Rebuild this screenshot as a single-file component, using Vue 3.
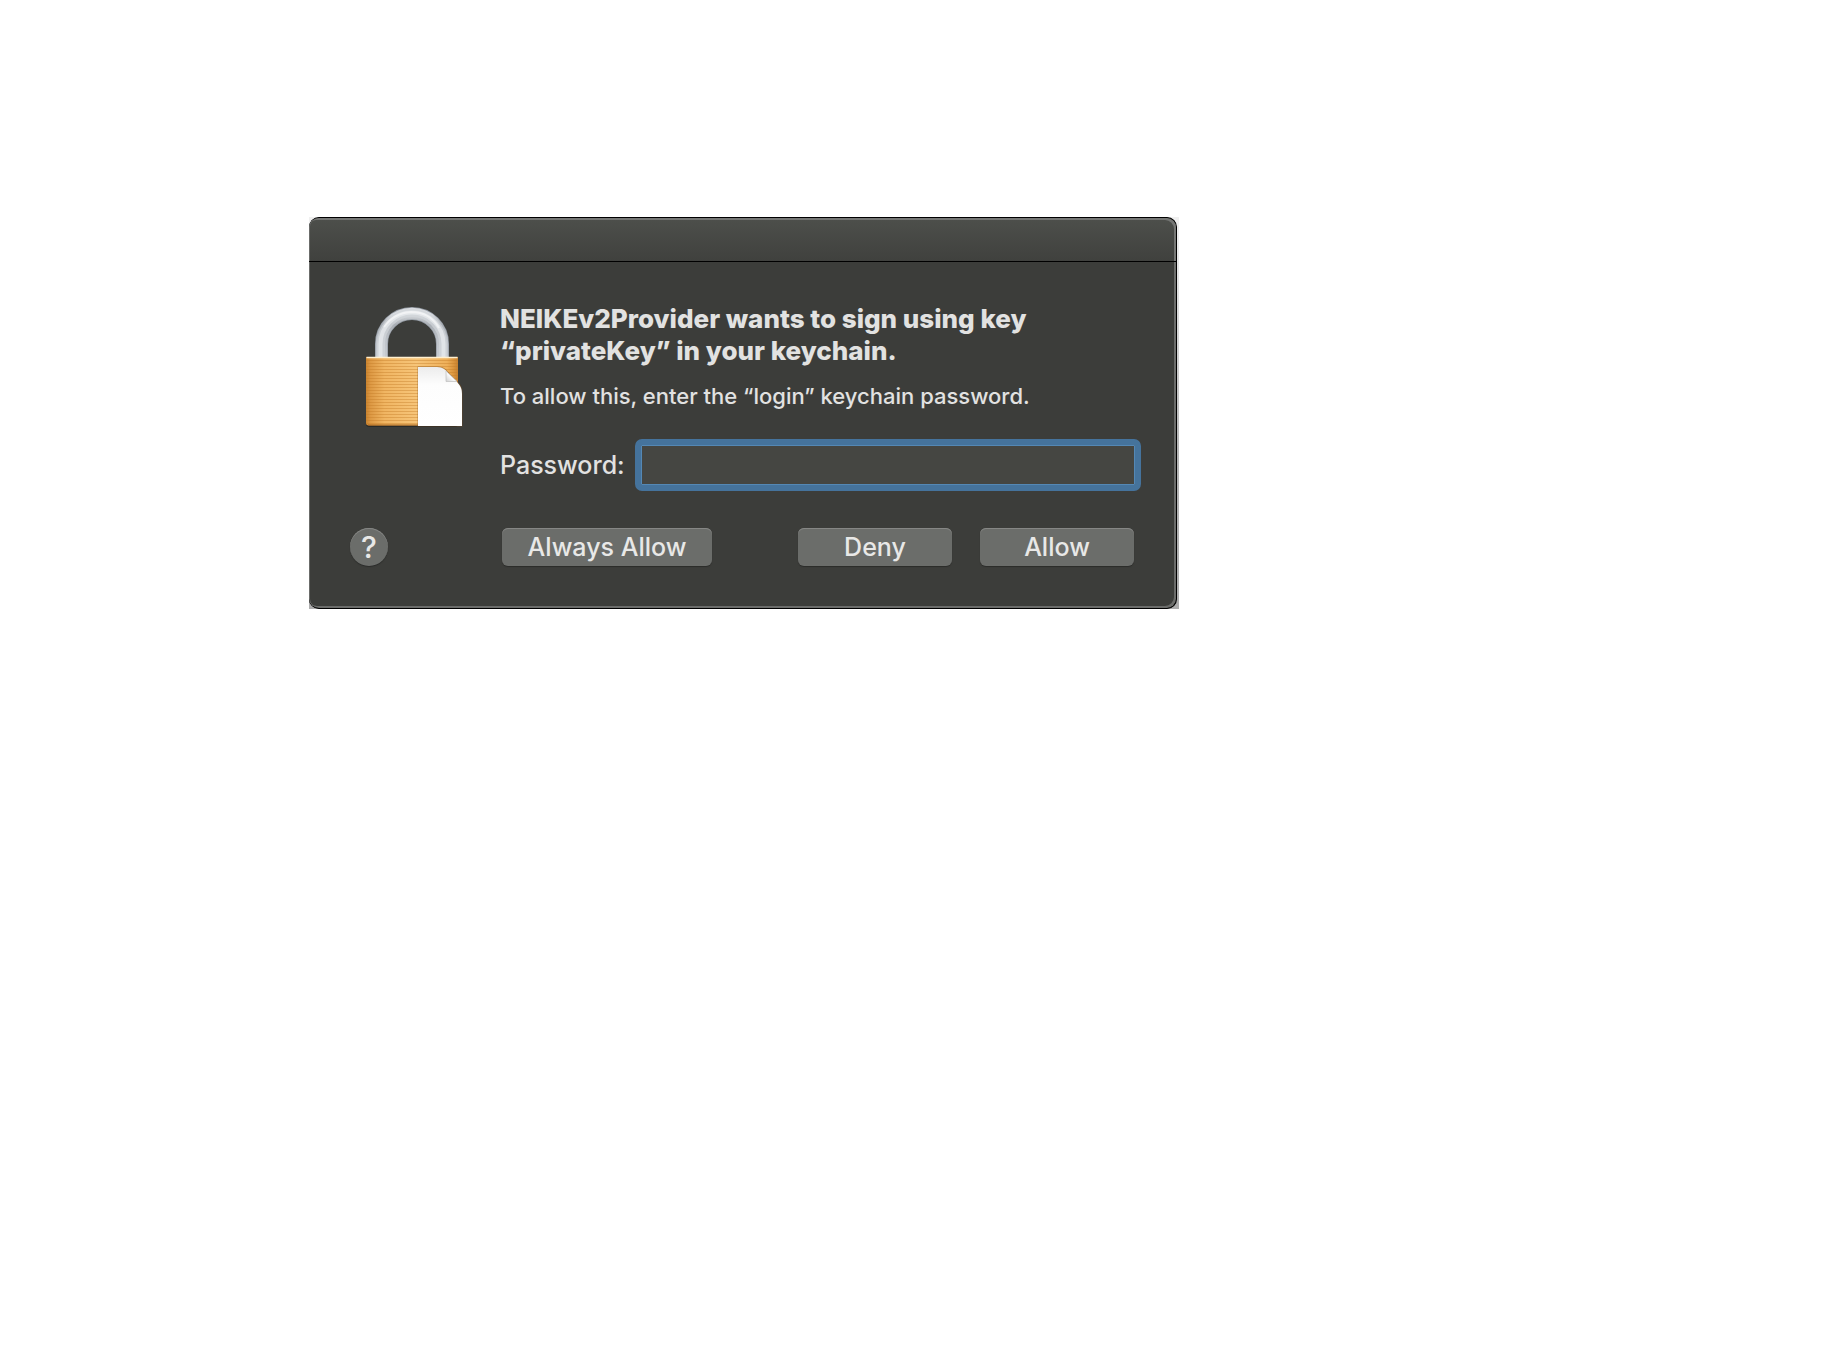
<template>
  <main class="page">
    <div class="backdrop">
      <form class="dialog" role="dialog" aria-labelledby="dialog-title" @submit.prevent>
        <div class="titlebar"></div>
        <div class="content">
          <svg class="lock-icon" width="108" height="128" viewBox="0 0 108 128" aria-hidden="true">
            <defs>
              <linearGradient id="brass" x1="0" x2="1" y1="0" y2="0">
                <stop offset="0" stop-color="#c98430" />
                <stop offset="0.05" stop-color="#dd9944" />
                <stop offset="0.2" stop-color="#f0b562" />
                <stop offset="0.55" stop-color="#f7c579" />
                <stop offset="0.88" stop-color="#eeb05a" />
                <stop offset="0.95" stop-color="#dc963e" />
                <stop offset="1" stop-color="#c58030" />
              </linearGradient>
              <pattern id="grooves" width="4" height="3" patternUnits="userSpaceOnUse">
                <rect width="4" height="1" fill="#c27a25" opacity="0.4" />
              </pattern>
              <linearGradient id="steel" x1="0" x2="0" y1="0" y2="1">
                <stop offset="0" stop-color="#d9dce0" />
                <stop offset="0.25" stop-color="#a9aeb4" />
                <stop offset="0.6" stop-color="#bfc4ca" />
                <stop offset="1" stop-color="#c6cbd1" />
              </linearGradient>
              <linearGradient id="paper" x1="0" x2="0" y1="0" y2="1">
                <stop offset="0" stop-color="#ececec" />
                <stop offset="0.3" stop-color="#fdfdfd" />
                <stop offset="1" stop-color="#ffffff" />
              </linearGradient>
              <linearGradient id="fold" x1="0" x2="1" y1="1" y2="0">
                <stop offset="0" stop-color="#d0d0d0" />
                <stop offset="0.5" stop-color="#ffffff" />
              </linearGradient>
            </defs>
            <!-- shackle -->
            <g fill="none">
              <path d="M21.5 55V41a30.5 30.5 0 0 1 61 0V55" stroke="#9299a2" stroke-width="13" />
              <path d="M21.5 55V41a30.5 30.5 0 0 1 61 0V55" stroke="url(#steel)" stroke-width="11.6" />
              <path d="M21 55V41a31 31 0 0 1 62 0V55" stroke="#d3d7dc" stroke-width="8" opacity="0.7" />
              <path d="M20.500 55V41a31.500 31.500 0 0 1 63 0V55" stroke="#e9ecef" stroke-width="4" opacity="0.7" />
              <path d="M24 24Q34 10 51 9Q70 9 79 25" stroke="#ffffff" stroke-width="2" opacity="0.5" />
            </g>
            <!-- body -->
            <rect x="6" y="55" width="92" height="69" rx="3" fill="#000" opacity="0.3" />
            <path d="M6 54H98V120Q98 122.500 95 122.500H9Q6 122.500 6 120Z" fill="url(#brass)" />
            <path d="M6 56H98V120Q98 122.500 95 122.500H9Q6 122.500 6 120Z" fill="url(#grooves)" />
            <path d="M6.500 54.500H97.500" stroke="#fff0cf" stroke-width="1.500" />
            <path d="M8 122H96" stroke="#a8651c" stroke-width="1" />
            <!-- document -->
            <path d="M57.500 63.500H78C84 63.500 87 67 90 71L98 79C102 83 102.500 86 102.500 91V123.500H57.500Z" fill="#7d5220" opacity="0.5" />
            <path d="M58 64H77C83 64 86 67 89 71L96 78C101 83 102 86 102 91V123H58Z" fill="url(#paper)" />
            <path d="M86 68V78.500H97Z" fill="url(#fold)" stroke="#c4c4c4" stroke-width="0.800" />
          </svg>
          <div class="details">
            <h1 id="dialog-title">NEIKEv2Provider wants to sign using key “privateKey” in your keychain.</h1>
            <p>To allow this, enter the “login” keychain password.</p>
            <div class="field">
              <label for="password">Password:</label>
              <input id="password" v-model="password" type="password">
            </div>
          </div>
        </div>
        <div class="actions">
          <button type="button" class="help" aria-label="Help">?</button>
          <button type="button" class="always">Always Allow</button>
          <button type="button" class="choice">Deny</button>
          <button type="submit" class="choice">Allow</button>
        </div>
      </form>
    </div>
  </main>
</template>

<script setup>
import { ref } from 'vue'

const password = ref('')
</script>

<style>
body {
  margin: 0;
  background: #fff;
}
</style>

<style scoped>
.page {
  padding: 217px 0 0 309px;
  font-family: Inter, "Liberation Sans", sans-serif;
  font-weight: 500;
  color: #e2e2e1;
}

.backdrop {
  max-width: 868px;
  padding-right: 2px;
  background: linear-gradient(#f0f0f0, #b4b4b4 60%, #acacac);
}

.dialog {
  border: 1px solid #000;
  border-left: 0;
  border-radius: 10px;
  overflow: hidden;
  background: #3c3d3a;
  box-shadow: inset 1px 0 #6b6c6a, inset -2px -2px #6b6c6a;
}

.titlebar {
  height: 43px;
  border-bottom: 1px solid #000;
  border-radius: 9px 9px 0 0;
  background: linear-gradient(#4d4f4b, #40413e);
  box-shadow: inset 1px 0 #6b6c6a, inset -2px 2px #757674;
}

.content {
  display: flex;
  gap: 32px;
  padding: 41px 35px 0 51px;
}

.lock-icon {
  flex: none;
}

.details {
  flex: 1;
}

h1 {
  margin: 0;
  font-size: 26px;
  line-height: 32px;
  font-weight: 800;
}

p {
  margin: 15px 0 29px;
  font-size: 22px;
  line-height: 28px;
}

.field {
  display: flex;
  align-items: center;
  gap: 10px;
}

label {
  font-size: 25px;
  line-height: 32px;
}

input {
  flex: 1;
  min-width: 0;
  height: 52px;
  box-sizing: border-box;
  padding: 0 8px;
  border: 6px solid #45739c;
  border-radius: 7px;
  outline: none;
  background: #454642;
  box-shadow: inset 0 0 0 1px #5488b5;
  color: inherit;
  font: inherit;
  font-size: 25px;
}

.actions {
  display: flex;
  gap: 28px;
  padding: 37px 42px 42px 41px;
}

button {
  height: 38px;
  padding: 0;
  border: 0;
  border-radius: 6px;
  background: #6b6d6a;
  box-shadow: inset 0 1px #868785, 0 1px 1px #2b2c2a;
  color: #e8e8e7;
  font: inherit;
  font-size: 25px;
  line-height: 38px;
}

.help {
  width: 38px;
  border-radius: 50%;
  font-size: 30px;
}

.always {
  width: 210px;
  margin: 0 auto 0 86px;
}

.choice {
  width: 154px;
}
</style>
